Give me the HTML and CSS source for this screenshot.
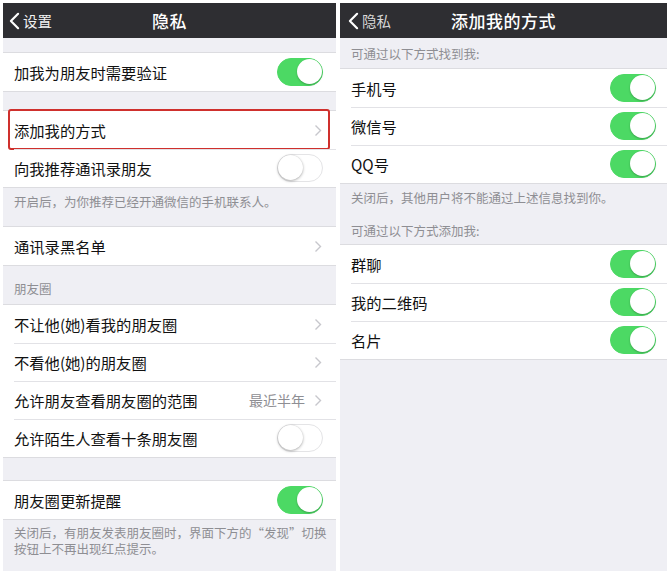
FILE: index.html
```html
<!DOCTYPE html>
<html lang="zh">
<head>
<meta charset="utf-8">
<link rel="stylesheet" href="styles.css">
</head>
<body>
<div class="page">
  <section class="panel panel-left">
    <div class="nav">
      <div class="back">
        <svg class="back-icon" viewBox="0 0 12 20" width="11" height="18"><polyline points="10,2 2,10 10,18" fill="none" stroke="#fff" stroke-width="2.4" stroke-linecap="round" stroke-linejoin="round"/></svg>
        <span>设置</span>
      </div>
      <div class="title">隐私</div>
    </div>

    <div class="gap g14"></div>
    <div class="group">
      <div class="row"><span class="label">加我为朋友时需要验证</span><span class="switch on"></span></div>
    </div>

    <div class="gap g18"></div>
    <div class="group">
      <div class="row marked"><span class="label">添加我的方式</span><svg class="chev" viewBox="0 0 8 13" width="8" height="13"><polyline points="1.5,1.5 6.5,6.5 1.5,11.5" fill="none" stroke="#c7c7cc" stroke-width="1.4"/></svg></div>
      <div class="row"><span class="label">向我推荐通讯录朋友</span><span class="switch"></span></div>
    </div>
    <div class="foot f1">开启后，为你推荐已经开通微信的手机联系人。</div>

    <div class="group">
      <div class="row"><span class="label">通讯录黑名单</span><svg class="chev" viewBox="0 0 8 13" width="8" height="13"><polyline points="1.5,1.5 6.5,6.5 1.5,11.5" fill="none" stroke="#c7c7cc" stroke-width="1.4"/></svg></div>
    </div>
    <div class="head">朋友圈</div>
    <div class="group">
      <div class="row"><span class="label">不让他(她)看我的朋友圈</span><svg class="chev" viewBox="0 0 8 13" width="8" height="13"><polyline points="1.5,1.5 6.5,6.5 1.5,11.5" fill="none" stroke="#c7c7cc" stroke-width="1.4"/></svg></div>
      <div class="row"><span class="label">不看他(她)的朋友圈</span><svg class="chev" viewBox="0 0 8 13" width="8" height="13"><polyline points="1.5,1.5 6.5,6.5 1.5,11.5" fill="none" stroke="#c7c7cc" stroke-width="1.4"/></svg></div>
      <div class="row"><span class="label">允许朋友查看朋友圈的范围</span><span class="value">最近半年</span><svg class="chev" viewBox="0 0 8 13" width="8" height="13"><polyline points="1.5,1.5 6.5,6.5 1.5,11.5" fill="none" stroke="#c7c7cc" stroke-width="1.4"/></svg></div>
      <div class="row"><span class="label">允许陌生人查看十条朋友圈</span><span class="switch"></span></div>
    </div>

    <div class="gap g22"></div>
    <div class="group">
      <div class="row"><span class="label">朋友圈更新提醒</span><span class="switch on"></span></div>
    </div>
    <div class="foot f2">关闭后，有朋友发表朋友圈时，界面下方的“发现”切换按钮上不再出现红点提示。</div>
  </section>

  <section class="panel panel-right">
    <div class="nav">
      <div class="back back-dim">
        <svg class="back-icon" viewBox="0 0 12 20" width="11" height="18"><polyline points="10,2 2,10 10,18" fill="none" stroke="#fff" stroke-width="2.4" stroke-linecap="round" stroke-linejoin="round"/></svg>
        <span>隐私</span>
      </div>
      <div class="title">添加我的方式</div>
    </div>

    <div class="head h-top">可通过以下方式找到我:</div>
    <div class="group">
      <div class="row"><span class="label">手机号</span><span class="switch on"></span></div>
      <div class="row"><span class="label">微信号</span><span class="switch on"></span></div>
      <div class="row"><span class="label">QQ号</span><span class="switch on"></span></div>
    </div>
    <div class="foot f3">关闭后，其他用户将不能通过上述信息找到你。</div>
    <div class="head h-mid">可通过以下方式添加我:</div>
    <div class="group">
      <div class="row"><span class="label">群聊</span><span class="switch on"></span></div>
      <div class="row"><span class="label">我的二维码</span><span class="switch on"></span></div>
      <div class="row"><span class="label">名片</span><span class="switch on"></span></div>
    </div>
  </section>
</div>
</body>
</html>
```

FILE: styles.css
```css
* { box-sizing: border-box; }

html, body {
  margin: 0;
  padding: 0;
  background: #ffffff;
}

body {
  font-family: "Noto Sans CJK SC", "Noto Sans", "Liberation Sans", sans-serif;
  color: #111;
}

.page {
  display: flex;
  gap: 4px;
  padding: 3px 3px 0 3px;
  width: 670px;
  height: 571px;
  overflow: hidden;
}

.panel {
  background: #efeff4;
  display: flex;
  flex-direction: column;
  height: 568px;
}

.panel-left { width: 333px; }
.panel-right { width: 327px; }

.nav {
  position: relative;
  height: 35px;
  background: #2e2e32;
  display: flex;
  align-items: center;
  justify-content: center;
  flex-shrink: 0;
}

.back {
  position: absolute;
  left: 6px;
  top: 0;
  bottom: 0;
  display: flex;
  align-items: center;
  gap: 3px;
  color: #f2f2f2;
  font-size: 14.5px;
}

.back-dim { color: #d8d8d8; left: 8px; }

.back-icon { display: block; }

.title {
  color: #ffffff;
  font-size: 17px;
  font-weight: 500;
  letter-spacing: 0.5px;
}

.gap { flex-shrink: 0; }
.g14 { height: 14px; }
.g18 { height: 18px; }
.g22 { height: 22px; }

.group {
  background: #ffffff;
  border-top: 1px solid #dcdce0;
  border-bottom: 1px solid #dcdce0;
  flex-shrink: 0;
}

.row {
  position: relative;
  height: 38px;
  display: flex;
  align-items: center;
  padding: 0 13px 0 11px;
}

.panel-right .row { padding: 0 11px 0 11px; }

.row + .row::before {
  content: "";
  position: absolute;
  left: 11px;
  right: 0;
  top: 0;
  border-top: 1px solid #e2e2e6;
}

.label {
  flex: 1;
  font-size: 15.3px;
  color: #111;
  white-space: nowrap;
}

.value {
  font-size: 14px;
  color: #8e8e93;
  margin-right: 9px;
}

.chev { display: block; margin-right: 1px; }

.marked::after {
  content: "";
  position: absolute;
  left: 5px;
  right: 6px;
  top: -2px;
  bottom: -1px;
  border: 2.5px solid #cf302d;
  border-radius: 3px;
}

.switch {
  position: relative;
  width: 46px;
  height: 28px;
  border-radius: 14px;
  background: #ffffff;
  border: 1.5px solid #e4e4e6;
  flex-shrink: 0;
}

.switch::after {
  content: "";
  position: absolute;
  left: 0;
  top: 0;
  width: 25px;
  height: 25px;
  border-radius: 50%;
  background: #ffffff;
  box-shadow: 0 1px 3px rgba(0,0,0,0.3), 0 0 1px rgba(0,0,0,0.15);
}

.switch.on {
  background: #4cd964;
  border-color: #4cd964;
}

.switch.on::after {
  left: auto;
  right: 0;
  box-shadow: 0 1px 2px rgba(0,0,0,0.25);
}

.foot {
  font-size: 12.5px;
  color: #8e8e93;
  line-height: 16px;
  padding: 0 11px;
  flex-shrink: 0;
}

.f1 { padding-top: 6px; height: 38px; }
.f2 { padding-top: 5px; padding-right: 3px; }
.f3 { padding-top: 6px; height: 30px; }

.head {
  font-size: 12.5px;
  color: #8e8e93;
  line-height: 16px;
  padding: 0 11px;
  display: flex;
  align-items: flex-end;
  flex-shrink: 0;
}

.panel-left .head { height: 38px; padding-bottom: 7px; }
.h-top { height: 30px; padding-bottom: 6px; }
.h-mid { height: 30px; padding-bottom: 5px; }
```
